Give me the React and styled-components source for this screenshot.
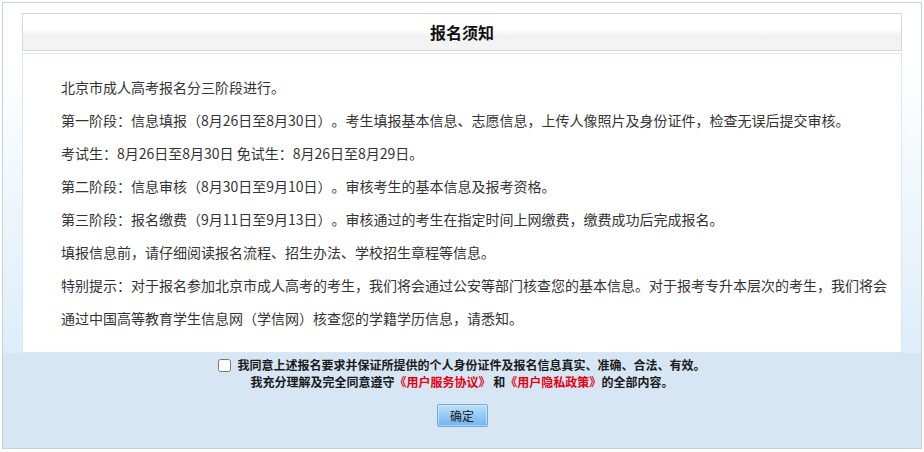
import React from 'react';
import styled, { createGlobalStyle } from 'styled-components';

const GlobalStyle = createGlobalStyle`
  html, body {
    margin: 0;
    padding: 0;
    background: #fff;
  }
  body {
    font-family: "Noto Sans CJK SC", "Liberation Sans", sans-serif;
    text-spacing-trim: space-all;
  }
`;

const Page = styled.div`
  padding: 2px 0 0 2px;
`;

const Panel = styled.div`
  border: 1px solid #c9d2d2;
  box-sizing: border-box;
  width: 920px;
`;

const Top = styled.div`
  background: linear-gradient(to bottom, #ffffff 0%, #ffffff 15%, #ddedfa 100%);
  padding: 10px 19px 0;
`;

const Header = styled.div`
  align-items: center;
  background: linear-gradient(to bottom, #ffffff 0%, #ffffff 42%, #f1f1f1 62%, #f4f4f4 100%);
  border: 1px solid #d6d6d6;
  box-sizing: border-box;
  display: flex;
  height: 38px;
  justify-content: center;
  margin-bottom: 2px;
  h2 {
    color: #111;
    font-size: 16px;
    font-weight: bold;
    margin: 0;
  }
`;

const Content = styled.div`
  background: #fff;
  border: 1px solid #d9e7ef;
  color: #333;
  font-size: 14px;
  line-height: 33px;
  padding: 17px 10px 17px 38px;
  p {
    margin: 0;
  }
`;

const Footer = styled.div`
  background: #d6e6f4;
  color: #1a1a1a;
  display: flex;
  flex-direction: column;
  align-items: center;
  padding: 3px 0 21px;
`;

const Agree = styled.div`
  font-size: 12px;
  font-weight: bold;
  line-height: 17px;
  text-align: center;
  input {
    height: 13px;
    margin: 0 6px 0 0;
    vertical-align: -2px;
    width: 13px;
  }
  em {
    color: #e60012;
    font-style: normal;
  }
`;

const Button = styled.button`
  background: linear-gradient(to bottom, #bde0fb 0%, #94caf6 50%, #6fb5f0 100%);
  border: 1px solid #78a9d3;
  border-radius: 2px;
  box-shadow: inset 0 0 0 1px rgba(255, 255, 255, 0.4);
  color: #1a1a1a;
  cursor: pointer;
  font-family: inherit;
  font-size: 12px;
  height: 23px;
  margin-top: 14px;
  padding: 0;
  width: 51px;
`;

const notes = [
  '北京市成人高考报名分三阶段进行。',
  '第一阶段：信息填报（8月26日至8月30日）。考生填报基本信息、志愿信息，上传人像照片及身份证件，检查无误后提交审核。',
  '考试生：8月26日至8月30日 免试生：8月26日至8月29日。',
  '第二阶段：信息审核（8月30日至9月10日）。审核考生的基本信息及报考资格。',
  '第三阶段：报名缴费（9月11日至9月13日）。审核通过的考生在指定时间上网缴费，缴费成功后完成报名。',
  '填报信息前，请仔细阅读报名流程、招生办法、学校招生章程等信息。',
  '特别提示：对于报名参加北京市成人高考的考生，我们将会通过公安等部门核查您的基本信息。对于报考专升本层次的考生，我们将会通过中国高等教育学生信息网（学信网）核查您的学籍学历信息，请悉知。',
];

export default function App() {
  return (
    <Page>
      <GlobalStyle />
      <Panel>
        <Top>
          <Header>
            <h2>报名须知</h2>
          </Header>
          <Content>
            {notes.map((t) => (
              <p key={t}>{t}</p>
            ))}
          </Content>
        </Top>
        <Footer>
          <Agree>
            <label>
              <input type="checkbox" />
              我同意上述报名要求并保证所提供的个人身份证件及报名信息真实、准确、合法、有效。
            </label>
            <br />
            我充分理解及完全同意遵守<em>《用户服务协议》</em> 和<em>《用户隐私政策》</em>的全部内容。
          </Agree>
          <Button type="button">确定</Button>
        </Footer>
      </Panel>
    </Page>
  );
}
